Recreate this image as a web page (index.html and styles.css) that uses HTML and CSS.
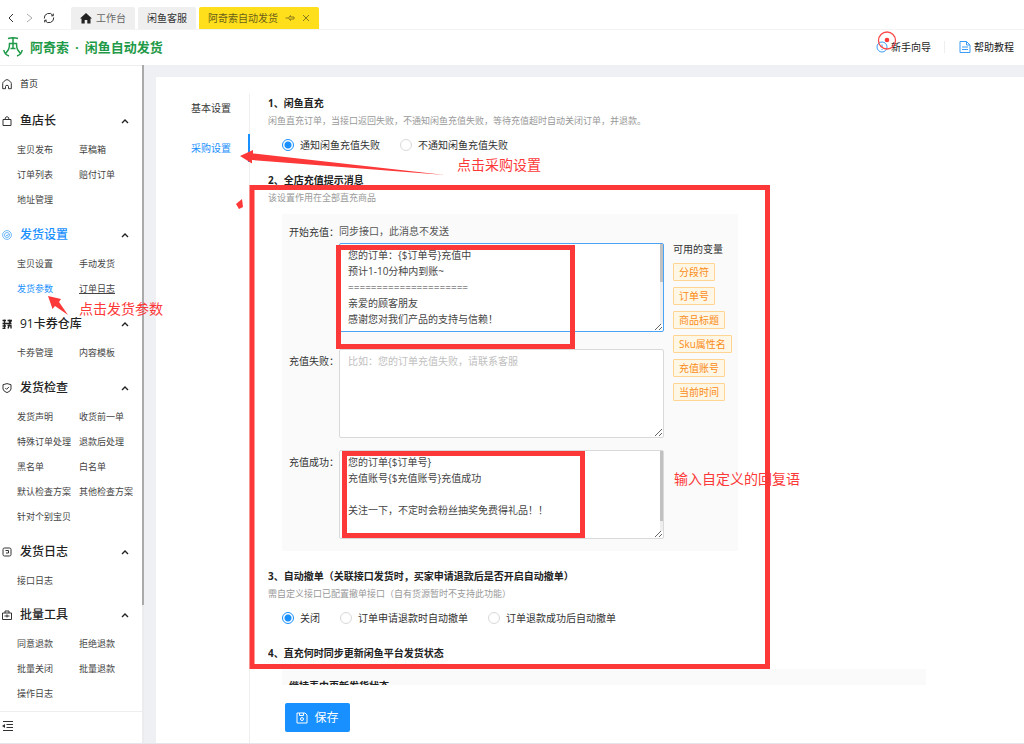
FILE: index.html
```html
<!DOCTYPE html>
<html lang="zh-CN">
<head>
<meta charset="utf-8">
<title>阿奇索·闲鱼自动发货</title>
<link rel="stylesheet" href="styles.css">
</head>
<body>
<div class="app">
  <nav class="tabbar" aria-label="标签页">
    <div class="tabbar-tools">
      <button class="icon-btn" type="button" aria-label="后退"><svg width="12" height="12" viewBox="0 0 12 12"><path d="M8 2 4 6l4 4" class="st dark"/></svg></button>
      <button class="icon-btn" type="button" aria-label="前进"><svg width="12" height="12" viewBox="0 0 12 12"><path d="M3 2l5 4-5 4" class="st pale"/></svg></button>
      <button class="icon-btn" type="button" aria-label="刷新"><svg width="12" height="12" viewBox="0 0 12 12"><path d="M1.3 6.5A4.7 4.7 0 0 1 10 3.6M10.700 5.500A4.700 4.700 0 0 1 2 8.400M10.300 1.600v2.200H8.200M1.700 10.400V8.200h2.100" class="st dark"/></svg></button>
    </div>
    <div class="tabs">
      <a class="tab" href="#work"><svg width="12" height="11" viewBox="0 0 12 11"><path d="M6 0 12 5.500H10.500V10.500H7.300V7H4.700V10.500H1.500V5.500H0Z" fill="#222"/></svg>工作台</a>
      <a class="tab tab-dark" href="#service">闲鱼客服</a>
      <a class="tab tab-active" href="#auto">阿奇索自动发货
        <svg width="10" height="8" viewBox="0 0 10 8"><path d="M.5 4H3.500M3.500 4 5.500 1.500V3H9V5H5.500V6.500Z" class="st olive"/></svg>
        <svg width="8" height="8" viewBox="0 0 8 8"><path d="M1 1l6 6M7 1 1 7" class="st olive"/></svg>
      </a>
    </div>
  </nav>

  <header class="header">
    <a class="brand" href="#home">
      <svg width="20" height="20" viewBox="0 0 20 20" fill="none" stroke="#1f9a48" stroke-width="1.500"><path d="M5 1.500Q10 .2 15 1.500M10 1v11M5.500 12.500Q6.500 11 6.500 6.500H13.500Q13.500 11 14.500 12.500M7.500 11.500h5M5.500 12.500 3 16M14.500 12.500 17 16M.8 13Q1.500 17.500 6 19M19.200 13Q18.500 17.500 14 19"/></svg>
      <span class="brand-name"><span>阿奇索</span><span>·</span><span>闲鱼自动发货</span></span>
    </a>
    <div class="header-links">
      <a class="header-link guide" href="#guide"><svg width="12" height="12" viewBox="0 0 12 12"><circle cx="6" cy="6" r="5" class="st blue"/><path d="M6 3.500v3M6 8v1" class="st blue"/></svg>新手向导</a>
      <a class="header-link" href="#help"><svg width="12" height="12" viewBox="0 0 12 12"><path d="M1 .5h6.500L11 4v7.500H1zM7.500.5V4H11M3 6h6M3 8.500h6" class="st blue"/></svg>帮助教程</a>
    </div>
  </header>

  <div class="body">
    <aside class="sidebar">
      <div class="menu">
        <a class="home" href="#index"><svg width="10" height="11" viewBox="0 0 10 11"><path d="M.7 9.700V4.500Q.7 3.500 1.500 2.800L3.800 1Q5 .3 6.200 1L8.500 2.800Q9.300 3.500 9.300 4.500V9.700H6.500V7.500Q6.500 6.300 5 6.300T3.500 7.500V9.700Z" class="st dark"/></svg>首页</a>

        <section class="group">
          <button class="group-head" type="button"><svg width="10" height="10" viewBox="0 0 10 10"><path d="M1 3.500h8v6H1zM3 3.500Q3 .7 5 .7T7 3.500" class="st dark"/></svg><span>鱼店长</span><svg class="caret" width="8" height="6" viewBox="0 0 8 6"><path d="M1 5l3-3 3 3" class="st bold"/></svg></button>
          <div class="items"><a href="#a1">宝贝发布</a><a href="#a2">草稿箱</a><a href="#a3">订单列表</a><a href="#a4">赔付订单</a><a href="#a5">地址管理</a></div>
        </section>

        <section class="group">
          <button class="group-head group-active" type="button"><svg width="10" height="10" viewBox="0 0 10 10"><circle cx="5" cy="5" r="4.400" class="st sky"/><circle cx="5" cy="5" r="2.500" class="st sky"/><path d="M4 5l1 1 1.500-2" class="st sky"/></svg><span>发货设置</span><svg class="caret" width="8" height="6" viewBox="0 0 8 6"><path d="M1 5l3-3 3 3" class="st bold"/></svg></button>
          <div class="items"><a href="#b1">宝贝设置</a><a href="#b2">手动发货</a><a class="current" href="#b3">发货参数</a><a class="hovered" href="#b4">订单日志</a></div>
        </section>

        <section class="group">
          <button class="group-head" type="button"><svg width="10" height="10" viewBox="0 0 10 10"><path d="M.5 1.500H4M2.500.5v9M.5 4.500H9.500M5.500 1.500H9.500L7.500 4M7.500.5v3M.5 7H4M5.500 6.500h4M6 9.500l1.500-4M9 6.500v3M.5 9.500h3" class="st bold"/></svg><span>91卡券仓库</span><svg class="caret" width="8" height="6" viewBox="0 0 8 6"><path d="M1 5l3-3 3 3" class="st bold"/></svg></button>
          <div class="items"><a href="#c1">卡券管理</a><a href="#c2">内容模板</a></div>
        </section>

        <section class="group">
          <button class="group-head" type="button"><svg width="10" height="10" viewBox="0 0 10 10"><path d="M5 .6 9 1.700V6Q8.500 8.500 5 9.600 1.500 8.500 1 6V1.700ZM3.300 5l1.300 1.300L7 3.900" class="st dark"/></svg><span>发货检查</span><svg class="caret" width="8" height="6" viewBox="0 0 8 6"><path d="M1 5l3-3 3 3" class="st bold"/></svg></button>
          <div class="items"><a href="#d1">发货声明</a><a href="#d2">收货前一单</a><a href="#d3">特殊订单处理</a><a href="#d4">退款后处理</a><a href="#d5">黑名单</a><a href="#d6">白名单</a><a href="#d7">默认检查方案</a><a href="#d8">其他检查方案</a><a href="#d9">针对个别宝贝</a></div>
        </section>

        <section class="group">
          <button class="group-head" type="button"><svg width="10" height="10" viewBox="0 0 10 10"><rect x="1" y="1" width="8" height="8" rx="1.500" class="st dark"/><path d="M3.500 3.500h3v2.500h-2.500" class="st dark"/></svg><span>发货日志</span><svg class="caret" width="8" height="6" viewBox="0 0 8 6"><path d="M1 5l3-3 3 3" class="st bold"/></svg></button>
          <div class="items"><a href="#e1">接口日志</a></div>
        </section>

        <section class="group">
          <button class="group-head" type="button"><svg width="10" height="10" viewBox="0 0 10 10"><path d="M.5 3h9v6.500h-9zM3 3V1h4v2M2.500 6h5M5 4.500v3" class="st dark"/></svg><span>批量工具</span><svg class="caret" width="8" height="6" viewBox="0 0 8 6"><path d="M1 5l3-3 3 3" class="st bold"/></svg></button>
          <div class="items"><a href="#f1">同意退款</a><a href="#f2">拒绝退款</a><a href="#f3">批量关闭</a><a href="#f4">批量退款</a><a href="#f5">操作日志</a></div>
        </section>
      </div>
      <div class="sidebar-foot">
        <button class="icon-btn" type="button" aria-label="收起菜单"><svg width="12" height="10" viewBox="0 0 12 10"><path d="M1 .5h10M4.500 3.500H11M4.500 6.500H11M1 9.500h10" class="st dark"/><path d="M0 5l3-2v4z" fill="#333"/></svg></button>
      </div>
    </aside>
    <div class="rail"><div class="rail-thumb"></div></div>

    <main class="main">
      <div class="panel">
        <nav class="side-tabs" aria-label="设置分类">
          <a class="side-tab" href="#basic">基本设置</a>
          <a class="side-tab side-tab-active" href="#purchase">采购设置</a>
        </nav>
        <form class="settings">
          <div class="scroll">
            <section class="block">
              <h3>1、闲鱼直充</h3>
              <p class="hint">闲鱼直充订单，当接口返回失败，不通知闲鱼充值失败，等待充值超时自动关闭订单，并退款。</p>
              <div class="options">
                <label><input type="radio" name="notify" checked>通知闲鱼充值失败</label>
                <label><input type="radio" name="notify">不通知闲鱼充值失败</label>
              </div>
            </section>

            <section class="block">
              <h3>2、全店充值提示消息</h3>
              <p class="hint">该设置作用在全部直充商品</p>
              <div class="card">
                <div class="fields">
                  <div class="field">
                    <label for="start">开始充值：</label>
                    <div class="control">
                      <p class="note">同步接口，此消息不发送</p>
                      <div class="area"><textarea id="start" class="focused">您的订单：{$订单号}充值中
预计1-10分种内到账~
=====================
亲爱的顾客朋友
感谢您对我们产品的支持与信赖！</textarea><span class="bar"><span class="bar-thumb bar-short"></span></span></div>
                    </div>
                  </div>
                  <div class="field">
                    <label for="fail">充值失败：</label>
                    <div class="control"><div class="area"><textarea id="fail" placeholder="比如：您的订单充值失败，请联系客服"></textarea></div></div>
                  </div>
                  <div class="field">
                    <label for="done">充值成功：</label>
                    <div class="control"><div class="area"><textarea id="done">您的订单{$订单号}
充值账号{$充值账号}充值成功

关注一下，不定时会粉丝抽奖免费得礼品！！</textarea><span class="bar"><span class="bar-thumb bar-long"></span></span></div></div>
                  </div>
                </div>
                <div class="vars">
                  <p>可用的变量</p>
                  <button type="button">分段符</button>
                  <button type="button">订单号</button>
                  <button type="button">商品标题</button>
                  <button type="button">Sku属性名</button>
                  <button type="button">充值账号</button>
                  <button type="button">当前时间</button>
                </div>
              </div>
            </section>

            <section class="block">
              <h3>3、自动撤单（关联接口发货时，买家申请退款后是否开启自动撤单）</h3>
              <p class="hint">需自定义接口已配置撤单接口（自有货源暂时不支持此功能）</p>
              <div class="options">
                <label><input type="radio" name="cancel" checked>关闭</label>
                <label><input type="radio" name="cancel">订单申请退款时自动撤单</label>
                <label><input type="radio" name="cancel">订单退款成功后自动撤单</label>
              </div>
            </section>

            <section class="block">
              <h3>4、直充何时同步更新闲鱼平台发货状态</h3>
              <div class="card card-wide"><h4>继持表中更新发货状态</h4></div>
            </section>
          </div>
          <div class="actions">
            <button class="save" type="submit"><svg width="12" height="12" viewBox="0 0 12 12"><path d="M1 1h8l2 2v8H1zM3.500 1v2.500h4V1" class="st white"/><circle cx="6" cy="7" r="1.500" class="st white"/></svg>保存</button>
          </div>
        </form>
      </div>
    </main>
  </div>

  <div class="marks">
    <svg class="marks-art" width="1024" height="744" viewBox="0 0 1024 744">
      <g fill="none" stroke="#fd3838" stroke-width="5">
        <rect x="252" y="187.500" width="515.500" height="479"/>
        <rect x="338.500" y="247.500" width="234" height="99"/>
        <rect x="344.500" y="453.500" width="238" height="82"/>
      </g>
      <g fill="#fd3838">
        <path d="M240 156l13-6v3.500L445 175 252 160v3.500z"/>
        <path d="M48 296l13 3-2 3 9 13-13-9-2.500 3z"/>
        <path d="M236 204l6-5 1 8-4 2z"/>
        <circle cx="887" cy="40" r="2.300"/>
      </g>
      <circle cx="887" cy="40.500" r="8.500" fill="none" stroke="#fd4a4a" stroke-width="1.300"/>
    </svg>
    <span class="mark mark-menu">点击发货参数</span>
    <span class="mark mark-tab">点击采购设置</span>
    <span class="mark mark-reply">输入自定义的回复语</span>
  </div>
</div>
</body>
</html>
```

FILE: styles.css
```css
* { box-sizing: border-box; }

body {
  margin: 0;
  font: 10px/16px "Open Sans", "Noto Sans CJK SC", sans-serif;
  color: #333;
  background: #fff;
}

h3, h4, p { margin: 0; font-size: 10px; }
a { color: inherit; text-decoration: none; }
svg { flex: none; }
button, textarea { font: inherit; color: inherit; }
button { margin: 0; padding: 0; border: 0; background: none; cursor: pointer; }

.st { fill: none; stroke-width: 1; }
.dark { stroke: #333; }
.bold { stroke: #222; stroke-width: 1.4; }
.pale { stroke: #aaa; }
.olive { stroke: #8a7a20; }
.blue { stroke: #3a9cf5; }
.sky { stroke: #6fb8fb; }
.white { stroke: #fff; }

.app {
  position: relative;
  display: flex;
  flex-direction: column;
  height: 100vh;
  overflow: hidden;
}

/* Tab strip */
.tabbar {
  display: flex;
  align-items: flex-end;
  height: 30px;
  border-bottom: 1px solid #f3f3f3;
}
.tabbar-tools { display: flex; align-items: center; gap: 7px; width: 71px; height: 22px; padding-left: 5px; }
.icon-btn { display: flex; }
.tabs { display: flex; gap: 3px; }
.tab {
  display: flex;
  align-items: center;
  gap: 4px;
  height: 22px;
  padding: 0 9px;
  border-radius: 2px 2px 0 0;
  background: #efefef;
  color: #666;
}
.tab-dark { color: #333; }
.tab-active { gap: 7px; background: #ffdf1b; color: #6b5f1a; }

/* Header */
.header {
  display: flex;
  align-items: center;
  justify-content: space-between;
  height: 35px;
  padding: 0 10px 2px 3px;
}
.brand {
  display: flex;
  align-items: center;
  gap: 7px;
  font-size: 13px;
  font-weight: 700;
  color: #1f9a48;
}
.brand-name { display: flex; gap: 6px; }
.header-links { display: flex; align-items: center; }
.header-link { display: flex; align-items: center; gap: 3px; color: #222; }
.guide { padding-right: 13px; margin-right: 14px; border-right: 1px solid #eee; line-height: 10px; }

/* Body */
.body { display: flex; flex: 1; min-height: 0; border-bottom: 1px solid #e4e5ea; }
.sidebar { display: flex; flex-direction: column; width: 142px; border-top: 1px solid #eee; }
.menu { flex: 1; min-height: 0; overflow: hidden; }
.home { display: flex; align-items: center; gap: 8px; height: 26px; margin: 5px 0 7px; padding-left: 2px; font-size: 9px; color: #222; }
.group { margin-bottom: 6px; }
.group:nth-of-type(5) { margin-bottom: 5px; }
.group-head {
  display: flex;
  align-items: center;
  gap: 8px;
  width: 100%;
  height: 33px;
  padding: 0 13px 0 2px;
  font-size: 12px;
  font-weight: 500;
  text-align: left;
  color: #222;
}
.group-active { color: #1890ff; }
.caret { margin-left: auto; }
.items { display: grid; grid-template-columns: 62px 62px; padding-left: 17px; font-size: 9px; line-height: 25px; color: #444; white-space: nowrap; }
.current { color: #1890ff; }
.hovered { text-decoration: underline; }
.sidebar-foot { display: flex; align-items: center; height: 32px; padding: 0 0 4px 2px; border-top: 1px solid #eee; }
.rail { width: 2px; padding-bottom: 138px; background: #ececee; }
.rail-thumb { height: 100%; background: #aaa; }

.main { display: flex; flex: 1; min-width: 0; padding: 12px 0 0 12px; background: #eff0f4; }
.panel { display: flex; flex: 1; min-width: 0; padding-top: 17px; background: #fff; }
.side-tabs { width: 94px; border-right: 1px solid #eee; }
.side-tab { display: block; margin-bottom: 12px; padding-left: 35px; line-height: 28px; color: #333; }
.side-tab-active { margin-right: -1px; border-right: 2px solid #1890ff; color: #1890ff; }

/* Settings */
.settings { display: flex; flex: 1; flex-direction: column; min-width: 0; padding-left: 18px; }
.scroll { flex: 1; min-height: 0; overflow: hidden; }
.block { margin-bottom: 16px; }
.block h3 { line-height: 18px; font-weight: 700; color: #222; }
.hint { font-size: 9px; line-height: 18px; color: #999; }
.options { display: flex; align-items: center; gap: 20px; height: 20px; margin: 5px 0 0 14px; }
.options label { display: flex; align-items: center; gap: 6px; }
input[type="radio"] {
  appearance: none;
  width: 12px;
  height: 12px;
  margin: 0;
  border: 1px solid #d9d9d9;
  border-radius: 50%;
  background: #fff;
}
input[type="radio"]:checked {
  border-color: #1890ff;
  background: radial-gradient(circle, #1890ff 3px, #fff 4px);
}

.card {
  display: flex;
  gap: 9px;
  width: 456px;
  margin: 7px 0 0 14px;
  padding: 9px 3px 12px 7px;
  background: #fafafa;
}
.card-wide { width: auto; margin-right: 98px; font-weight: 700; color: #222; }
.fields { display: flex; flex: 1; flex-direction: column; gap: 12px; }
.field { display: flex; }
.field:first-child { margin-bottom: 5px; }
.field > label { width: 50px; line-height: 18px; white-space: nowrap; }
.field + .field > label { padding-top: 3px; }
.control { flex: 1; }
.note { margin-bottom: 3px; line-height: 17px; color: #555; }
.area { position: relative; display: flex; }
textarea {
  display: block;
  width: 100%;
  height: 89px;
  padding: 3px 8px;
  border: 1px solid #d9d9d9;
  border-radius: 2px;
  outline: 0;
  background: #fff;
  line-height: 16px;
  color: #444;
}
textarea.focused { border-color: #4aa3f5; }
textarea::placeholder { color: #bfbfbf; }
.bar { position: absolute; top: 1px; right: 1px; bottom: 8px; width: 3px; background: #eee; }
.bar-thumb { display: block; background: #c1c1c1; }
.bar-short { height: 48%; }
.bar-long { height: 87%; }

.vars { display: flex; flex-direction: column; align-items: flex-start; gap: 6px; width: 62px; padding-top: 18px; }
.vars button {
  height: 18px;
  padding: 0 5px;
  border: 1px solid #ffd591;
  border-radius: 1px;
  background: #fff7e6;
  line-height: 16px;
  color: #fa8c16;
  white-space: nowrap;
}

.actions { display: flex; padding: 18px 0 11px 17px; }
.save {
  display: flex;
  align-items: center;
  justify-content: center;
  gap: 6px;
  width: 65px;
  height: 29px;
  border-radius: 2px;
  background: #1890ff;
  font-size: 12px;
  color: #fff;
}

/* Callouts drawn over the page */
.marks { position: absolute; inset: 0; pointer-events: none; }
.marks-art { position: absolute; top: 0; left: 0; }
.mark { position: absolute; font-size: 14px; line-height: 20px; color: #fd3838; white-space: nowrap; }
.mark-menu { left: 79px; top: 299px; }
.mark-tab { left: 457px; top: 155px; }
.mark-reply { left: 674px; top: 469px; }
```
